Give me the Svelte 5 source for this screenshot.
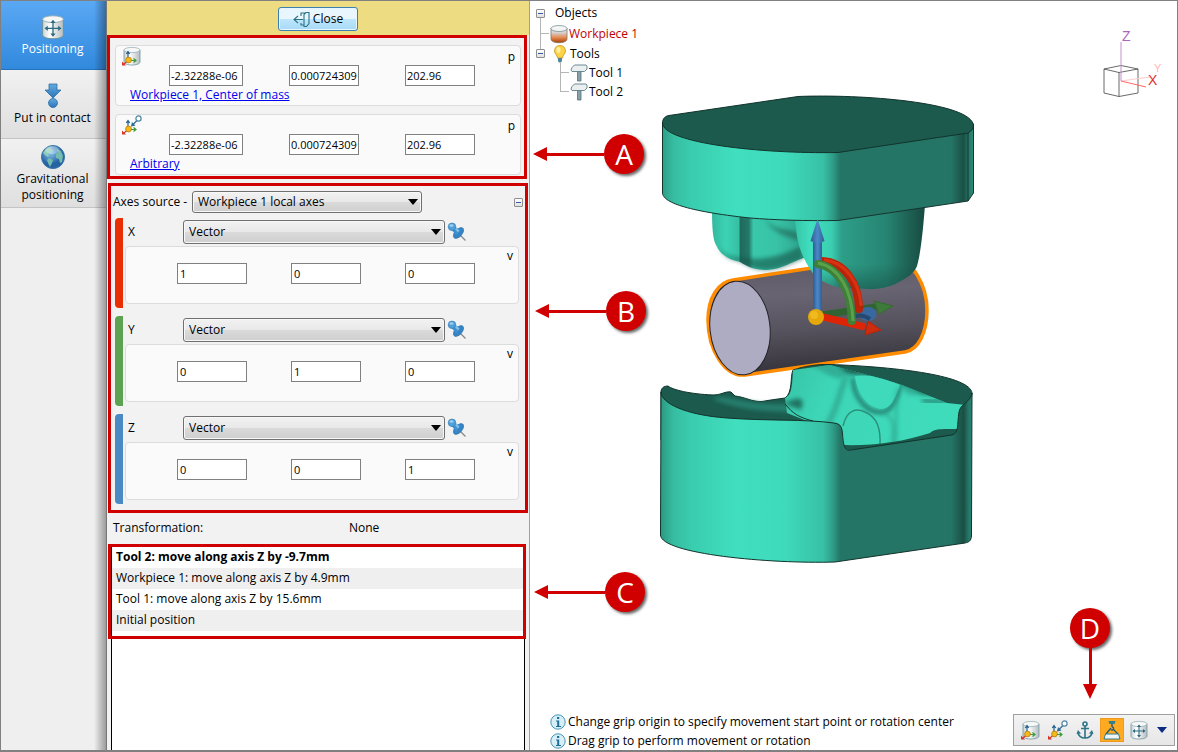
<script lang="ts">
	type Vec = [string, string, string];

	let modes = ['Positioning', 'Put in contact', 'Gravitational positioning'];
	let activeMode = $state(0);

	let origins = $state<{ icon: string; link: string; value: Vec }[]>([
		{ icon: 'mass', link: 'Workpiece 1, Center of mass', value: ['-2.32288e-06', '0.000724309', '202.96'] },
		{ icon: 'free', link: 'Arbitrary', value: ['-2.32288e-06', '0.000724309', '202.96'] }
	]);

	let axes = $state<{ name: string; color: string; value: Vec }[]>([
		{ name: 'X', color: '#e92e04', value: ['1', '0', '0'] },
		{ name: 'Y', color: '#5ba352', value: ['0', '1', '0'] },
		{ name: 'Z', color: '#4a89c4', value: ['0', '0', '1'] }
	]);

	let history = [
		'Tool 2: move along axis Z by -9.7mm',
		'Workpiece 1: move along axis Z by 4.9mm',
		'Tool 1: move along axis Z by 15.6mm',
		'Initial position'
	];

	let hints = [
		'Change grip origin to specify movement start point or rotation center',
		'Drag grip to perform movement or rotation'
	];

	let tools = ['mass', 'free', 'anchor', 'press', 'move'];
	let activeTool = $state('press');
</script>

{#snippet cylinder()}
	<path d="M2 4v12c0 2 4 3 8 3s8-1 8-3V4" fill="url(#metal)" stroke="#6f949f" stroke-width=".8" />
	<ellipse cx="10" cy="4" rx="8" ry="2.6" fill="#f6f7f7" stroke="#8fa9b1" stroke-width=".7" />
{/snippet}

{#snippet grip()}
	<path d="M6 14V6M4.300 8 6 5.500 7.700 8" fill="none" stroke="#235f8e" stroke-width="1.200" />
	<path d="M7 14.500h7M11.500 12.500l2.500 2-2.500 2" fill="none" stroke="#3b9a3b" stroke-width="1.200" />
	<path d="M6 14.500 1.500 18.500" stroke="#d8342a" stroke-width="1.200" />
	<path d="M0 15.500v4h4z" fill="#d8342a" />
	<circle cx="6.500" cy="14" r="2.900" fill="#f6b917" stroke="#a87208" stroke-width=".7" />
{/snippet}

{#snippet icon(name: string, size: number)}
	<svg width={size} height={size} viewBox="0 0 20 20" aria-hidden="true">
		{#if name === 'mass'}
			{@render cylinder()}
			{@render grip()}
		{:else if name === 'free'}
			{@render grip()}
			<path d="M9.500 11 15 5.500" stroke="#2f6f96" stroke-width="1.300" />
			<path d="m9 11.500 1-4.500 3.500 3.500z" fill="#2f6f96" />
			<circle cx="16.500" cy="3.500" r="2.600" fill="#fff" stroke="#4e87a4" stroke-width="1.200" />
		{:else if name === 'anchor'}
			<g fill="none" stroke="#2e7488" stroke-width="1.600">
				<circle cx="10" cy="4" r="2" />
				<path d="M10 6v12M6 8.500h8M3 12c0 3.500 3 6 7 6s7-2.500 7-6" />
			</g>
			<path d="m1.500 14 1.500-4 3 3.500zM18.500 14 17 10l-3 3.500z" fill="#2e7488" />
		{:else if name === 'press'}
			<path d="M6.500 1h7l-1 3h-5z" fill="#2f7f91" />
			<path d="M10 4v3M10 7a1.500 1.500 0 1 1-1 2.500" fill="none" stroke="#235c70" stroke-width="1.400" />
			<path d="M9 8 4 14M11 9l5 5" stroke="#235c70" stroke-width="1.300" />
			<path d="M3.500 14h13l1.500 5H2z" fill="#f1f5f5" stroke="#2f7f91" />
		{:else}
			{@render cylinder()}
			<path d="M10 5.500v11M4.500 11h11" stroke="#2b6b80" />
			<path
				d="m8 7 2-2.500L12 7zM8 15l2 2.500 2-2.500zM6 9l-2.500 2L6 13zM14 9l2.500 2-2.500 2z"
				fill="#2b6b80"
			/>
		{/if}
	</svg>
{/snippet}

{#snippet pinIcon()}
	<svg width="20" height="20" viewBox="0 0 20 20" aria-hidden="true">
		<path d="m12 12 6.500 6.500" stroke="#888" stroke-width="1.300" />
		<ellipse cx="11.500" cy="11" rx="6.500" ry="3.600" transform="rotate(-48 11.500 11)" fill="#3585c6" stroke="#2466a0" stroke-width=".6" />
		<path d="M4.500 8 8 4.500l5 4-3.500 5z" fill="#3f90cf" />
		<path d="M7 6.500 8.500 5l4 3.500-1.500 2z" fill="#7dbdea" />
		<circle cx="5" cy="4.800" r="3.800" fill="#4f9fdb" stroke="#2d75af" stroke-width=".6" />
		<ellipse cx="4.500" cy="3.500" rx="2" ry="1.200" fill="#9bd0f2" />
	</svg>
{/snippet}

{#snippet dropdown(label: string, value: string)}
	<span class="dropdown">
		<select aria-label={label}>
			<option>{value}</option>
		</select>
	</span>
{/snippet}

{#snippet callout(letter: string)}
	<div class="callout callout-{letter.toLowerCase()}">
		<span class="arrow-head"></span>
		<span class="arrow-line"></span>
		<span class="badge">{letter}</span>
	</div>
{/snippet}

<div class="app">
	<nav class="modes">
		{#each modes as mode, i}
			<button class="mode" class:active={activeMode === i} onclick={() => (activeMode = i)}>
				{#if i === 0}
					{@render icon('move', 26)}
				{:else if i === 1}
					<svg width="26" height="26" viewBox="0 0 26 26" aria-hidden="true">
						<path d="M9 1h8v6h4l-8 8-8-8h4z" fill="url(#blue)" stroke="#2d70a8" stroke-width=".8" />
						<circle cx="13" cy="20" r="4.500" fill="url(#blue)" stroke="#2d70a8" stroke-width=".8" />
					</svg>
				{:else}
					<svg width="26" height="26" viewBox="0 0 26 26" aria-hidden="true">
						<circle cx="13" cy="13" r="11.500" fill="url(#globe)" stroke="#3974a6" />
						<path d="M3 9c2-4 5-6 9-6l-1 2 2 1-3 3-2 1 1 2-1 1-3-2z" fill="#8fcdb9" />
						<path d="M9 14l4 2-1 3-2 4-2-4-1-3zM17 5l4 2 2 5-1 6-2 1-1-4-3-1v-4l2-2z" fill="#74bcae" />
						<ellipse cx="12" cy="6" rx="7" ry="4" fill="#fff" opacity=".3" />
					</svg>
				{/if}
				<span>{mode}</span>
			</button>
		{/each}
	</nav>

	<div class="panel">
		<header class="panel-head">
			<button class="close">
				<svg width="17" height="17" viewBox="0 0 17 17" aria-hidden="true">
					<path
						d="M1 8.500h9M5 5 1 8.500 5 12M8 5V2h5M8 12v2h3M11 3.500 13 1.500h3v11l-2.500 3H11z"
						fill="none"
						stroke="#2b7283"
						stroke-width="1.100"
					/>
				</svg>
				Close
			</button>
		</header>

		<section class="frame frame-origins">
			{#each origins as origin, i}
				<div class="group origin">
					<span class="origin-icon">{@render icon(origin.icon, 20)}</span>
					<span class="unit">p</span>
					{#each origin.value as _, k}
						<input
							class="num num-{k}"
							type="text"
							aria-label="Point {i + 1} {'XYZ'[k]}"
							bind:value={origin.value[k]}
						/>
					{/each}
					<a class="origin-link" href="#origin">{origin.link}</a>
				</div>
			{/each}
		</section>

		<section class="frame frame-axes">
			<div class="source">
				<span class="source-label">Axes source -</span>
				{@render dropdown('Axes source', 'Workpiece 1 local axes')}
				<button class="expander" aria-label="Collapse axes"></button>
			</div>
			{#each axes as axis}
				<div class="axis">
					<div class="axis-bar" style="background: {axis.color}"></div>
					<div class="axis-body">
						<div class="axis-head">
							<span class="axis-name">{axis.name}</span>
							{@render dropdown(axis.name + ' axis type', 'Vector')}
							<button class="pin" aria-label="Pin {axis.name} axis">{@render pinIcon()}</button>
						</div>
						<div class="group vector">
							<span class="unit">v</span>
							{#each axis.value as _, k}
								<input
									class="num num-{k}"
									type="text"
									aria-label="{axis.name} axis {'XYZ'[k]}"
									bind:value={axis.value[k]}
								/>
							{/each}
						</div>
					</div>
				</div>
			{/each}
		</section>

		<div class="transformation">
			<span>Transformation:</span>
			<span>None</span>
		</div>

		<section class="frame frame-history">
			<ol class="history">
				{#each history as step, i}
					<li class:current={i === 0}>{step}</li>
				{/each}
			</ol>
		</section>
		<div class="history-rest"></div>
	</div>

	<main class="view">
		<svg class="scene" width="325" height="480" viewBox="655 90 325 480" aria-hidden="true">
			<defs>
				<linearGradient id="metal">
					<stop offset="0" stop-color="#c9d2d4" />
					<stop offset=".35" stop-color="#fff" />
					<stop offset="1" stop-color="#b4bcc0" />
				</linearGradient>
				<linearGradient id="blue" x2="0" y2="1">
					<stop offset="0" stop-color="#62abe0" />
					<stop offset="1" stop-color="#2b75b8" />
				</linearGradient>
				<radialGradient id="globe" cx=".4" cy=".3">
					<stop offset="0" stop-color="#8cc8f0" />
					<stop offset="1" stop-color="#2563a3" />
				</radialGradient>
				<linearGradient id="wall" gradientUnits="userSpaceOnUse" x1="661" x2="973">
					<stop offset="0" stop-color="#2b9a83" />
					<stop offset=".04" stop-color="#36bda1" />
					<stop offset=".1" stop-color="#3acdaf" />
					<stop offset=".24" stop-color="#40dfbf" />
					<stop offset=".4" stop-color="#3edabb" />
					<stop offset=".52" stop-color="#37c0a5" />
					<stop offset=".55" stop-color="#2f9e88" />
					<stop offset=".575" stop-color="#247566" />
					<stop offset=".93" stop-color="#247566" />
					<stop offset=".97" stop-color="#1a4f44" />
					<stop offset=".985" stop-color="#247566" />
					<stop offset="1" stop-color="#2b8a77" />
				</linearGradient>
				<linearGradient id="knob" gradientUnits="userSpaceOnUse" x1="795" x2="925">
					<stop offset="0" stop-color="#37c4a8" />
					<stop offset=".12" stop-color="#40dfbf" />
					<stop offset=".28" stop-color="#3bceb1" />
					<stop offset=".36" stop-color="#2d9e89" />
					<stop offset=".7" stop-color="#278472" />
					<stop offset="1" stop-color="#174a40" />
				</linearGradient>
				<linearGradient id="knobShade" x2="0" y2="1">
					<stop offset=".7" stop-color="#14483d" stop-opacity="0" />
					<stop offset="1" stop-color="#14483d" stop-opacity=".5" />
				</linearGradient>
				<linearGradient id="lobe" gradientUnits="userSpaceOnUse" x1="712" x2="804">
					<stop offset="0" stop-color="#34b89d" />
					<stop offset=".15" stop-color="#3cd2b4" />
					<stop offset=".29" stop-color="#36bfa3" />
					<stop offset=".31" stop-color="#1f6a5b" />
					<stop offset=".4" stop-color="#24796a" />
					<stop offset=".45" stop-color="#39c8ab" />
					<stop offset=".7" stop-color="#38c2a6" />
					<stop offset="1" stop-color="#2fa48d" />
				</linearGradient>
				<linearGradient id="steel" x2=".12" y2="1">
					<stop offset="0" stop-color="#5a5763" />
					<stop offset=".35" stop-color="#686472" />
					<stop offset=".65" stop-color="#56535e" />
					<stop offset="1" stop-color="#35333b" />
				</linearGradient>
				<linearGradient id="shaft">
					<stop offset="0" stop-color="#2e5d93" />
					<stop offset=".5" stop-color="#4b88c8" />
					<stop offset="1" stop-color="#315f93" />
				</linearGradient>
				<linearGradient id="cavity" x2="1" y2=".2">
					<stop offset="0" stop-color="#36bfa3" />
					<stop offset=".3" stop-color="#3dd6b7" />
					<stop offset="1" stop-color="#3fdcbc" />
				</linearGradient>
				<filter id="soft" x="-30%" y="-30%" width="160%" height="160%"><feGaussianBlur stdDeviation="2" /></filter>
				<clipPath id="cavityClip">
					<path d="M785 398c6-3 7-8 8-28l37-5 53 14 19 6 45 18 19 2-6 34-11 5-101 6-7-4-3-18-9-5-22-2-20-8z" />
				</clipPath>
			</defs>

			<!-- workpiece -->
			<path
				d="M733 280 812 268 895 258C912 260 927 285 927 310 927 333 918 350 905 352L745 375C725 377 708 350 708 320 708 298 718 282 733 280z"
				fill="url(#steel)"
				stroke="#ff8c00"
				stroke-width="3.500"
			/>
			<ellipse cx="740" cy="328" rx="30" ry="47" transform="rotate(-6 740 328)" fill="#aeacc3" stroke="#25242a" />

			<!-- upper tool -->
			<path
				d="M712 210C712 228 713 240 716 245 721 256 730 260 740 262 747 266 753 270 767 270 783 269 793 261 804 258L812 215z"
				fill="url(#lobe)"
			/>
			<path d="M765 219c8 10 20 10 34 13l2 10c-12-5-28-8-36-23z" fill="#1b5a4d" opacity=".55" filter="url(#soft)" />
			<path d="M718 247c8 10 18 11 28 11 16 2 32 0 55-12l2 13c-12 4-22 11-36 11-16 0-20-6-29-9-8-1-16-6-20-14z" fill="#175548" opacity=".6" filter="url(#soft)" />
			<path
				d="M795 215C796 242 801 256 812 272 817 279 822 281 829 284 841 290 858 288 867 289 878 290 893 286 897 283 909 277 914 273 917 266 921 252 923 230 925 205z"
				fill="url(#knob)"
			/>
			<path
				d="M795 215C796 242 801 256 812 272 817 279 822 281 829 284 841 290 858 288 867 289 878 290 893 286 897 283 909 277 914 273 917 266 921 252 923 230 925 205z"
				fill="url(#knobShade)"
			/>
			<path
				d="M662.500 123V193C663 202 685 211 750 218 775 220 805 221 838 220.500L968 201 973.500 193V124z"
				fill="url(#wall)"
				stroke="#16352f"
			/>
			<path
				d="M662.500 123C662.500 119 665 116 669 115.500L798 96.500C860 94 973 102 973.500 126 973.500 129 971 131 968 133L838 152.500C760 154 663 143 662.500 123z"
				fill="#1b5a4d"
				stroke="#12332c"
			/>
			<path d="M968 133v68" stroke="#16352f" />

			<!-- lower tool -->
			<path
				d="M661 392C661 388 664 386 668 386 673 390 690 394 713 395 722 395 725 391 731 392L735 396C745 397 752 402 762 401.500 770 400 778 399 785 398 793 393 790 376 793 370 805 366 818 364 830 364.500 900 367 970 376 972 393L966 445 850 460 661 440z"
				fill="#1b5a4d"
				stroke="#12332c"
			/>
			<path d="M712 399c15-6 25 6 75 5l6 8c-35 0-62-5-81-13z" fill="#267f6d" filter="url(#soft)" />
			<g clip-path="url(#cavityClip)">
				<path d="M780 360h190v95H780z" fill="url(#cavity)" />
				<path d="M783 403c12-3 16-8 20-1l-2 8z" fill="#174f43" opacity=".7" filter="url(#soft)" />
				<path d="M800 362c20 4 28 18 44 16l10-3 45 8 8 11 65 8V350H826z" fill="#2b9681" opacity=".6" filter="url(#soft)" />
				<path d="M836 360c8 14 14 14 26 14l36 8 14 5 10 6 50 3V350z" fill="#1b5a4d" filter="url(#soft)" />
				<path d="M846 377c-6 14-10 36-19 48" fill="none" stroke="#32b097" stroke-width="6" filter="url(#soft)" />
				<path d="M853 378c0 19 14 36 30 34 8-1 14-13 17-27" fill="none" stroke="#21796a" stroke-width="4" filter="url(#soft)" />
				<path d="M855 376c15-2 29 1 45 9-5 14-9 23-18 24-13-1-25-14-27-33z" fill="#3edabb" />
				<path d="M843 426c4-17 14-18 22-14 12 5 16 16 15 35" fill="none" stroke="#2b917d" stroke-width="1.500" />
				<path d="M883 413c9 2 12 13 9 31M898 388c-4 20 0 38-3 56" fill="none" stroke="#2fa48d" stroke-width="2" filter="url(#soft)" />
				<path d="M922 400c14 3 28 2 46 2" fill="none" stroke="#2a927e" stroke-width="5" filter="url(#soft)" />
				<path d="M930 433c4-5 15-4 27-4v12l-112 12-3-8c30 1 61-3 88-12z" fill="#1b5a4d" />
			</g>
			<path d="M785 404c5 5 8 12 28 17" fill="none" stroke="#12332c" />
			<path
				d="M661 392C661 403 685 415 727 418 765 421 805 419 834 423 845 424 841 433 844 445 845 449 847 451 851 450L952 435C959 433 957 425 959 412 960 404 970 403 972 393L971.500 536C971 541 969 542 965 543L835 562C770 564 661 554 660.500 535z"
				fill="url(#wall)"
				stroke="#12332c"
			/>

			<!-- grip -->
			<path d="m822 315 54-8" stroke="#316432" stroke-width="7" />
			<path d="M874 301 893 306 879 314z" fill="#3e7a3a" stroke="#356b31" stroke-linejoin="round" />
			<ellipse cx="868" cy="314" rx="8.500" ry="7" fill="#3868a0" />
			<path d="M852 318c6-4 12-3 18 1" fill="none" stroke="#27496f" stroke-width="4" />
			<path d="M822 261C845 262 859 284 859 309" fill="none" stroke="#b92408" stroke-width="8" stroke-linecap="round" />
			<path d="M824 260C846 262 860 284 861 306" fill="none" stroke="#d83212" stroke-width="3" />
			<path d="m819 316 46 11" stroke="#dd2406" stroke-width="7" />
			<path d="m868 321 13 9-16 5z" fill="#ce2c0e" stroke="#b52309" stroke-linejoin="round" />
			<path d="M813 238h9v74h-9z" fill="url(#shaft)" />
			<path d="m817.500 219 7 22q-7 4-14 0z" fill="url(#shaft)" />
			<path d="M818 264C838 267 851 290 852 321" fill="none" stroke="#3f8038" stroke-width="8" stroke-linecap="round" />
			<path d="M818 263C839 267 852 290 853 321" fill="none" stroke="#5aa14b" stroke-width="3" />
			<circle cx="816" cy="317" r="8" fill="#e5a80a" />
			<circle cx="814" cy="315" r="4" fill="#f6c52d" opacity=".6" />
		</svg>

		<ul class="tree">
			<li>
				<div class="node root"><button class="expander" aria-label="Collapse Objects"></button>Objects</div>
				<ul>
					<li class="node workpiece">
						<svg width="18" height="20" viewBox="0 0 18 20" aria-hidden="true">
							<defs>
								<linearGradient id="hot" x2="0" y2="1">
									<stop offset=".3" stop-color="#d5d5d5" />
									<stop offset=".65" stop-color="#e58a50" />
									<stop offset="1" stop-color="#a63e05" />
								</linearGradient>
							</defs>
							<path d="M1 4v11c0 5 16 5 16 0V4" fill="url(#hot)" stroke="#8c7061" stroke-width=".8" />
							<ellipse cx="9" cy="4.500" rx="8" ry="3" fill="#f4f5f5" stroke="#7b939b" stroke-width=".8" />
						</svg>
						Workpiece 1
					</li>
					<li>
						<div class="node tools">
							<button class="expander" aria-label="Collapse Tools"></button>
							<svg width="18" height="18" viewBox="0 0 18 18" aria-hidden="true">
								<path d="M9 .5c-3.500 0-5.500 2.500-5.500 5.500 0 3 3 4 3 7h5c0-3 3-4 3-7C14.500 3 12.500.5 9 .5z" fill="#fbd344" stroke="#c99420" stroke-width=".8" />
								<ellipse cx="7.500" cy="5" rx="2" ry="3" fill="#fff0a8" />
								<path d="M7 13h4v3l-1 1.500H8L7 16z" fill="#53869a" />
							</svg>
							Tools
						</div>
						<ul class="tool-list">
							{#each ['Tool 1', 'Tool 2'] as tool}
								<li class="node tool">
									<svg width="18" height="18" viewBox="0 0 18 18" aria-hidden="true">
										<path d="M7.500 7h3.500v10H7.500z" fill="#8aa0a8" stroke="#50727f" stroke-width=".8" />
										<path d="M2 3.500 4.500 1H16l1 1v3l-2.500 2.500H2L1 6z" fill="#eceff0" stroke="#5b7d8a" stroke-width=".9" />
									</svg>
									{tool}
								</li>
							{/each}
						</ul>
					</li>
				</ul>
			</li>
		</ul>

		<svg class="orientation" width="70" height="75" viewBox="0 0 70 75" role="img" aria-label="View orientation">
			<path d="M4 41 21 37.500 38 41v24l-19 3.500L4 65zM4 41l15 3.500L38 41M19 44.500v24" fill="none" stroke="#444" stroke-width=".8" />
			<path d="M21 14v39" stroke="#c58ed0" />
			<path d="m21 53 29-4" stroke="#ffcccc" />
			<path d="m21 53 25 6" stroke="#f66" />
			<text x="22" y="13" fill="#b064bd">Z</text>
			<text x="54" y="44" fill="#ffb9b9" font-size="11">Y</text>
			<text x="48" y="57" fill="#e8302c">X</text>
		</svg>

		{@render callout('A')}
		{@render callout('B')}
		{@render callout('C')}
		{@render callout('D')}

		<ul class="hints">
			{#each hints as hint}
				<li>
					<svg width="16" height="16" viewBox="0 0 16 16" aria-hidden="true">
						<circle cx="8" cy="8" r="7.200" fill="#d8eef7" stroke="#4796b7" />
						<path d="M7 3h2.200v2H7zM6 6.500h3.200V12H11v1H6v-1h1.200V7.500H6z" fill="#1e6f96" />
					</svg>
					{hint}
				</li>
			{/each}
		</ul>

		<div class="toolbar">
			{#each tools as tool}
				<button class:active={activeTool === tool} aria-label={tool} onclick={() => (activeTool = tool)}>
					{@render icon(tool, 20)}
				</button>
			{/each}
			<button class="more" aria-label="More"></button>
		</div>
	</main>
</div>

<style>
	:global(body) {
		margin: 0;
	}

	.app {
		display: grid;
		grid-template-columns: 106px 423px minmax(0, 1fr);
		box-sizing: border-box;
		min-height: 100vh;
		border: 1px solid #808080;
		border-bottom-width: 2px;
		background: #f2f2f2;
		color: #000;
		font: 12px/16px 'Open Sans', 'Noto Sans', sans-serif;
	}

	button,
	input,
	select {
		box-sizing: border-box;
		margin: 0;
		font: inherit;
		color: inherit;
	}

	ul,
	ol {
		margin: 0;
		padding: 0;
		list-style: none;
	}

	/* mode switcher */
	.modes {
		position: relative;
		background: #efefef;
		border-right: 1px solid #777;
	}

	.modes::after {
		content: '';
		position: absolute;
		inset: 0 0 0 auto;
		width: 12px;
		background: linear-gradient(to right, transparent, rgba(0, 0, 0, 0.35));
		pointer-events: none;
	}

	.mode {
		display: flex;
		flex-direction: column;
		align-items: center;
		justify-content: center;
		gap: 1px;
		width: 100%;
		height: 69px;
		padding: 0 9px 0 7px;
		border: 0;
		border-bottom: 1px solid #c4c4c4;
		background: linear-gradient(#f1f1f1, #dfdfdf);
	}

	.mode.active {
		border-bottom-color: #2672b8;
		background: linear-gradient(#5aa8f4, #3189dd);
		color: #fff;
	}

	/* panel */
	.panel {
		display: flex;
		flex-direction: column;
		border-right: 1px solid #a0a0a0;
	}

	.panel-head {
		display: flex;
		justify-content: center;
		align-items: center;
		box-sizing: border-box;
		height: 34px;
		padding-top: 2px;
		background: #eddc82;
	}

	.close {
		display: flex;
		align-items: center;
		justify-content: center;
		gap: 3px;
		width: 80px;
		height: 24px;
		padding: 0;
		border: 1px solid #3c7fb1;
		border-radius: 3px;
		background: linear-gradient(#eaf6fd 50%, #bee6fd 50%, #a7d9f5);
		box-shadow: inset 0 0 0 1px #e8f7ff;
	}

	.frame {
		border: 3px solid #d00000;
	}

	.frame-origins {
		display: flex;
		flex-direction: column;
		gap: 8px;
		margin-right: 2px;
		padding: 7px 3px 1px 5px;
	}

	.group {
		display: grid;
		box-sizing: border-box;
		border: 1px solid #dcdcdc;
		border-radius: 4px;
		background: #fafafa;
	}

	.origin {
		grid-template-columns: 53px 120px 116px 1fr;
		grid-template-rows: 19px 21px 19px;
	}

	.origin-icon {
		grid-area: 1 / 1;
		height: 19px;
		padding-left: 6px;
	}

	.unit {
		grid-area: 1 / 4;
		justify-self: end;
		padding: 3px 5px 0 0;
	}

	.num {
		grid-row: 2;
		width: 70px;
		height: 21px;
		padding: 0 1px;
		border: 1px solid #808080;
		background: #fff;
		font-size: 11px;
	}

	.num-0 {
		grid-column: 2;
	}

	.num-1 {
		grid-column: 3;
	}

	.num-2 {
		grid-column: 4;
	}

	.origin .num-0 {
		width: 74px;
	}

	.origin-link {
		grid-area: 3 / 1 / 4 / 5;
		justify-self: start;
		padding: 1px 0 0 14px;
		color: #0000f0;
	}

	.frame-axes {
		display: flex;
		flex-direction: column;
		gap: 8px;
		margin: 4px 1px 0;
		padding: 5px 6px 6px 4px;
	}

	.source {
		display: flex;
		align-items: center;
		height: 22px;
		margin-bottom: -3px;
	}

	.source-label {
		flex: none;
		width: 79px;
		margin-left: -2px;
		white-space: nowrap;
	}

	.source .dropdown {
		width: 230px;
		height: 22px;
	}

	.source .expander {
		margin: 0 -4px 0 auto;
	}

	.dropdown {
		position: relative;
		display: block;
	}

	.dropdown::after {
		content: '';
		position: absolute;
		right: 4px;
		top: calc(50% - 3px);
		border: 5px solid transparent;
		border-top: 6px solid #000;
		border-bottom: 0;
		pointer-events: none;
	}

	select {
		appearance: none;
		display: block;
		width: 100%;
		height: 100%;
		padding: 0 16px 0 5px;
		border: 1px solid #707070;
		border-radius: 3px;
		background: linear-gradient(#f2f2f2, #e8e8e8 50%, #dadada 50%, #cfcfcf);
		box-shadow: inset 0 0 0 1px #f8f8f8;
	}

	.expander {
		position: relative;
		flex: none;
		width: 9px;
		height: 9px;
		padding: 0;
		border: 1px solid #8e8e8e;
		border-radius: 1px;
		background: linear-gradient(#fff, #e0e0e0);
	}

	.expander::after {
		content: '';
		position: absolute;
		left: 1px;
		top: 3px;
		width: 5px;
		height: 1px;
		background: #3c57a8;
	}

	.axis {
		display: flex;
		gap: 2px;
		height: 90px;
	}

	.axis-bar {
		width: 8px;
		border-radius: 4px 0 0 4px;
	}

	.axis-body {
		flex: 1;
		padding-top: 2px;
	}

	.axis-head {
		display: flex;
		align-items: center;
		height: 24px;
		margin-bottom: 2px;
	}

	.axis-name {
		width: 55px;
		padding-left: 3px;
	}

	.axis-head .dropdown {
		width: 262px;
		height: 24px;
	}

	.pin {
		height: 20px;
		margin-left: 2px;
		padding: 0;
		border: 0;
		background: none;
	}

	.vector {
		grid-template-columns: 51px 114px 114px 1fr;
		grid-template-rows: 16px 21px 19px;
	}

	.vector .unit {
		padding-top: 1px;
	}

	.vector .num {
		padding-left: 2px;
	}

	.transformation {
		display: grid;
		grid-template-columns: 236px 1fr;
		align-items: center;
		box-sizing: border-box;
		height: 31px;
		padding: 0 0 2px 6px;
	}

	.frame-history {
		margin: 0 3px 0 1px;
	}

	.history {
		padding-bottom: 5px;
		border-left: 1px solid #000;
		background: #fff;
	}

	.history li {
		height: 21px;
		padding-left: 4px;
		line-height: 20px;
	}

	.history li:nth-child(even) {
		background: #efefef;
	}

	.history .current {
		font-weight: bold;
	}

	.history-rest {
		flex: 1;
		margin: 0 4px;
		border: solid #000;
		border-width: 0 1px;
		background: #fff;
	}

	/* 3D view */
	.view {
		position: relative;
		background: #fff;
	}

	.scene {
		position: absolute;
		left: 125px;
		top: 89px;
	}

	.tree {
		position: absolute;
		left: 6px;
		top: 2px;
	}

	.tree::before {
		content: '';
		position: absolute;
		left: 4px;
		top: 14px;
		height: 32px;
		border-left: 1px solid #b5b5b5;
	}

	.node {
		display: flex;
		align-items: center;
		gap: 1px;
		height: 19px;
	}

	.root {
		gap: 10px;
		height: 20px;
	}

	/* branch lines of the tree */
	.workpiece::before,
	.tool::before {
		content: '';
		width: 9px;
		border-top: 1px solid #b5b5b5;
	}

	.workpiece {
		height: 21px;
		padding-left: 4px;
		color: #c00000;
	}

	.tools .expander {
		margin-right: 5px;
	}

	.tool-list {
		position: relative;
		margin-left: 24px;
	}

	.tool-list::before {
		content: '';
		position: absolute;
		left: 0;
		top: 0;
		height: 29px;
		border-left: 1px solid #b5b5b5;
	}

	.orientation {
		position: absolute;
		right: 7px;
		top: 27px;
		font: 14px 'Liberation Sans', Arial, sans-serif;
	}

	.callout {
		position: absolute;
		display: flex;
		align-items: center;
	}

	.callout-a {
		left: 3px;
		top: 133px;
	}

	.callout-b {
		left: 5px;
		top: 290px;
	}

	.callout-c {
		left: 4px;
		top: 571px;
	}

	.callout-d {
		right: 67px;
		bottom: 51px;
		flex-direction: column-reverse;
	}

	.arrow-head {
		border: 7px solid transparent;
		border-right: 14px solid #d00000;
		border-left: 0;
	}

	.arrow-line {
		width: 57px;
		height: 3px;
		background: #d00000;
	}

	.badge {
		display: flex;
		align-items: center;
		justify-content: center;
		width: 40px;
		height: 40px;
		border-radius: 50%;
		background: #d00000;
		box-shadow: 2px 2px 3px rgba(0, 0, 0, 0.6);
		color: #fff;
		font: 28px/40px 'Open Sans', 'Noto Sans', sans-serif;
	}

	.callout-d .arrow-head {
		border: 7px solid transparent;
		border-top: 15px solid #d00000;
		border-bottom: 0;
	}

	.callout-d .arrow-line {
		width: 3px;
		height: 36px;
	}

	.hints {
		position: absolute;
		left: 20px;
		bottom: 0;
	}

	.hints li {
		display: flex;
		align-items: center;
		gap: 2px;
		height: 19px;
		white-space: nowrap;
	}

	.toolbar {
		position: absolute;
		right: 2px;
		bottom: 4px;
		display: flex;
		align-items: center;
		gap: 3px;
		padding: 3px 5px;
		border: 1px solid #a0a0a0;
		background: linear-gradient(#f3f3f3, #e6e6e6);
	}

	.toolbar button {
		display: flex;
		align-items: center;
		justify-content: center;
		width: 24px;
		height: 24px;
		padding: 0;
		border: 0;
		background: none;
	}

	.toolbar button.active {
		background: #ffaa20;
		box-shadow: inset 0 0 0 1px #f39a1c;
	}

	.toolbar .more {
		width: 15px;
	}

	.more::after {
		content: '';
		border: 5px solid transparent;
		border-top: 6px solid #0b2b80;
		border-bottom: 0;
	}
</style>
